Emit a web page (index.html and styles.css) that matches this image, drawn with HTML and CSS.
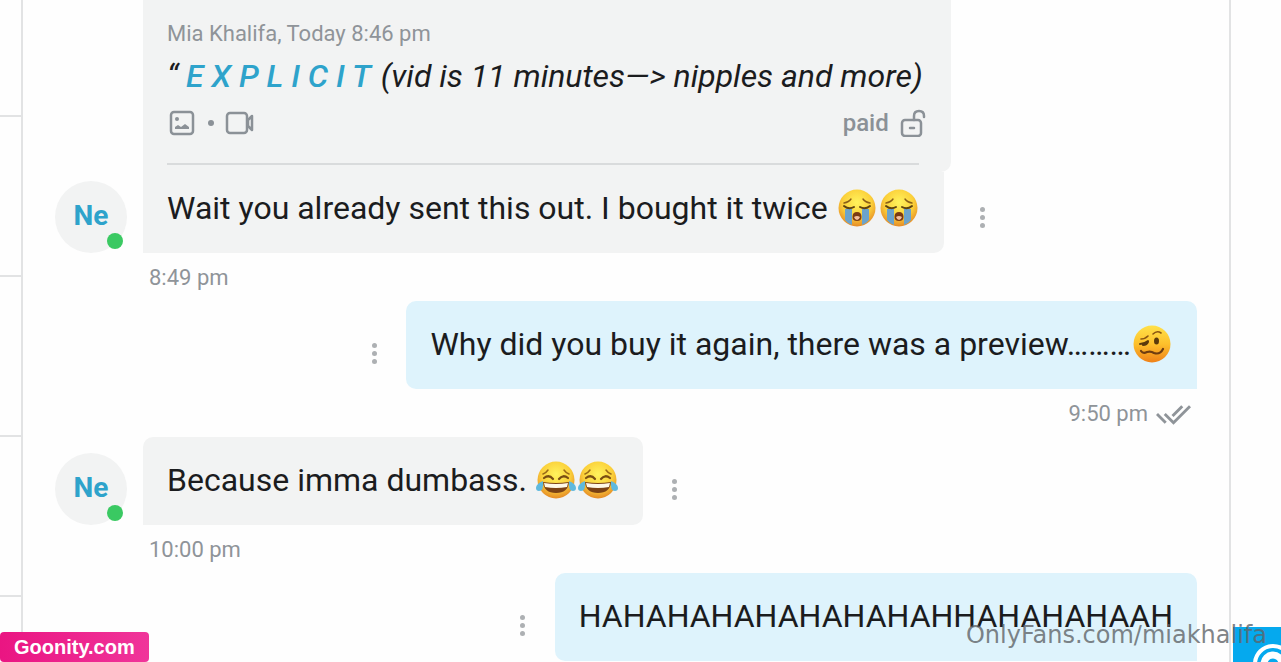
FILE: index.html
```html
<!DOCTYPE html>
<html lang="en">
<head>
  <meta charset="UTF-8" />
  <meta name="viewport" content="width=device-width, initial-scale=1.0"/>
  <title>Messages</title>
  <link rel="stylesheet" href="styles.css">
</head>
<body>
  <!-- shared emoji drawings -->
  <svg class="defs" aria-hidden="true">
    <defs>
      <radialGradient id="skin" cx="50%" cy="35%" r="65%">
        <stop offset="0" stop-color="#fff35c"/>
        <stop offset="0.6" stop-color="#fbd03a"/>
        <stop offset="1" stop-color="#e58a26"/>
      </radialGradient>
      <linearGradient id="skin-warm" x1="0" y1="0" x2="0" y2="1">
        <stop offset="0" stop-color="#ffe14a"/>
        <stop offset="0.5" stop-color="#fdc02c"/>
        <stop offset="1" stop-color="#ef8118"/>
      </linearGradient>
      <symbol id="cry" viewBox="0 0 38 38">
        <circle cx="19" cy="19" r="18.5" fill="url(#skin)"/>
        <path d="M7 20h7v16q-4-1-7-5zM24 20h7v11q-3 4-7 5z" fill="#6ba3cc"/>
        <path d="M6 14q5-1 7-4M32 14q-5-1-7-4" fill="none" stroke="#8a5f18" stroke-width="1.4" stroke-linecap="round"/>
        <path d="M6 17q5 4 10 1M22 18q5 3 10-1" fill="none" stroke="#5f430f" stroke-width="2" stroke-linecap="round"/>
        <path d="M14.500 28q0-5 4.500-5t4.500 5q0 4-4.500 4t-4.500-4z" fill="#7a3a12"/>
        <path d="M16 28q3-2 6 0-1 3-3 3t-3-3z" fill="#f4bf9c"/>
      </symbol>
      <symbol id="joy" viewBox="0 0 42 38">
        <circle cx="21" cy="19" r="18.5" fill="url(#skin)"/>
        <path d="M8 13q3-1 5-4M34 13q-3-1-5-4" fill="none" stroke="#9a6a18" stroke-width="1.5" stroke-linecap="round"/>
        <path d="M9 17q5-4 9 1M24 18q4-5 9-1" fill="none" stroke="#7a4e12" stroke-width="2.2" stroke-linecap="round"/>
        <path d="M8 21q13 2 26 0-1 11-13 11T8 21z" fill="#7b4114"/>
        <path d="M9 22q12 2 24 0l-1 4q-11 2-22 0z" fill="#fff8e6"/>
        <path d="M8 20q-7 3-7 7 0 3 3 3 5 0 4-10zM34 20q7 3 7 7 0 3-3 3-5 0-4-10z" fill="#5fb9de"/>
      </symbol>
      <symbol id="woozy" viewBox="0 0 38 38">
        <circle cx="19" cy="19" r="18.5" fill="url(#skin-warm)"/>
        <path d="M8 14q4 0 7-3M20 9q4-4 8-1" fill="none" stroke="#8a5512" stroke-width="1.6" stroke-linecap="round"/>
        <path d="M7 19q4 0 8-3M10 20q4 0 5-3" fill="none" stroke="#5a3a0c" stroke-width="2" stroke-linecap="round"/>
        <ellipse cx="23.500" cy="16" rx="2.5" ry="3.5" fill="#5a3a0c"/>
        <path d="M8 26q2 3 6 1 4-1 7 1 6 2 9-4" fill="none" stroke="#6e3c10" stroke-width="2.2" stroke-linecap="round"/>
      </symbol>
    </defs>
  </svg>

  <aside class="chat-list">
    <div class="chat-item"></div>
    <div class="chat-item"></div>
    <div class="chat-item"></div>
    <div class="chat-item"></div>
  </aside>

  <main class="chat">
    <div class="message">
      <div class="avatar">Ne<span class="online"></span></div>
      <div class="content">
        <div class="quote">
          <div class="quote-author">Mia Khalifa, Today 8:46 pm</div>
          <div class="quote-text">“ <b>E X P L I C I T</b> (vid is 11 minutes—&gt; nipples and more)</div>
          <div class="quote-footer">
            <svg class="icon" viewBox="0 0 28 28">
              <rect x="2" y="3" width="22" height="22" rx="3"/>
              <circle class="solid" cx="8" cy="10" r="2"/>
              <path class="solid" d="M6 20v-2l3-2 3 2 4-3 4 3v2z"/>
            </svg>
            <span class="dot"></span>
            <svg class="icon video" viewBox="0 0 30 28">
              <rect x="2" y="4" width="20" height="20" rx="3"/>
              <path d="M23 11l4-4v14l-4-4z"/>
            </svg>
            <span class="paid">paid</span>
            <svg class="icon" viewBox="0 0 28 28">
              <rect x="3" y="11" width="19" height="16" rx="3"/>
              <path d="M15 11V7q0-5 5-5t5 5v1M11 19h4"/>
            </svg>
          </div>
          <hr class="quote-line">
        </div>
        <div class="bubble reply">Wait you already sent this out. I bought it twice <svg class="emoji"><use href="#cry"/></svg><svg class="emoji"><use href="#cry"/></svg></div>
      </div>
      <button class="more" aria-label="Message options"><i></i><i></i><i></i></button>
    </div>
    <div class="meta">8:49 pm</div>

    <div class="message own">
      <button class="more" aria-label="Message options"><i></i><i></i><i></i></button>
      <div class="bubble">Why did you buy it again, there was a preview………<svg class="emoji"><use href="#woozy"/></svg></div>
    </div>
    <div class="meta own">9:50 pm
      <svg class="checks" viewBox="0 0 36 22">
        <path d="M1 11l9 9M9 11l9 9L35 3M17 13L27 3"/>
      </svg>
    </div>

    <div class="message">
      <div class="avatar">Ne<span class="online"></span></div>
      <div class="bubble">Because imma dumbass. <svg class="emoji joy"><use href="#joy"/></svg><svg class="emoji joy"><use href="#joy"/></svg></div>
      <button class="more" aria-label="Message options"><i></i><i></i><i></i></button>
    </div>
    <div class="meta">10:00 pm</div>

    <div class="message own">
      <button class="more" aria-label="Message options"><i></i><i></i><i></i></button>
      <div class="bubble">HAHAHAHAHAHAHAHAHHAHAHAHAAH</div>
    </div>
  </main>

  <aside class="side">
    <div class="promo">
      <svg viewBox="0 0 48 35">
        <circle cx="40" cy="37" r="18" fill="none" stroke="#fff" stroke-width="4"/>
        <circle cx="40" cy="37" r="9" fill="none" stroke="#fff" stroke-width="7"/>
      </svg>
    </div>
  </aside>

  <div class="site-tag">Goonity.com</div>
  <div class="watermark">OnlyFans.com/miakhalifa</div>
</body>
</html>
```
FILE: styles.css
```css
* {
  box-sizing: border-box;
  margin: 0;
  padding: 0;
}

body {
  position: relative;
  display: flex;
  height: 100vh;
  overflow: hidden;
  background: #fefefe;
  color: #1b1c1e;
  font-family: Roboto, sans-serif;
  font-size: 32px;
  line-height: 40px;
}

.defs {
  position: absolute;
  width: 0;
  height: 0;
}

/* left list */
.chat-list {
  flex: none;
  width: 23px;
  border-right: 2px solid #e2e3e4;
}

.chat-item {
  height: 160px;
  border-bottom: 2px solid #e2e3e4;
}

.chat-item:first-child {
  height: 117px;
}

/* conversation */
.chat {
  flex: 1;
  min-width: 0;
  padding: 0 32px;
}

.message {
  display: flex;
  align-items: flex-end;
}

.message.own {
  justify-content: flex-end;
}

.avatar {
  position: relative;
  flex: none;
  width: 72px;
  height: 72px;
  margin-right: 16px;
  border-radius: 50%;
  background: #f2f3f3;
  color: #2ea3cb;
  font-size: 28px;
  font-weight: 700;
  line-height: 70px;
  text-align: center;
}

.online {
  position: absolute;
  right: 4px;
  bottom: 4px;
  width: 16px;
  height: 16px;
  border-radius: 50%;
  background: #3ac962;
}

.content {
  display: flex;
  flex-direction: column;
  align-items: flex-start;
}

.quote,
.bubble {
  background: #f2f3f3;
  white-space: nowrap;
}

.quote {
  padding: 20px 24px 7px;
  border-radius: 0 0 10px 0;
}

.quote-author {
  color: #8f9499;
  font-size: 22px;
  line-height: 28px;
}

.quote-text {
  margin-top: 8px;
  padding-right: 4px;
  font-style: italic;
}

.quote-text b {
  margin-right: 2px;
  color: #2ea3cb;
  font-weight: 500;
}

.quote-footer {
  display: flex;
  align-items: center;
  height: 67px;
  padding: 0 0 14px 2px;
  color: #8b9197;
}

.quote-line {
  margin-right: 8px;
  border: none;
  border-top: 2px solid #d9dbdc;
}

.icon {
  flex: none;
  width: 28px;
  height: 28px;
  fill: none;
  stroke: #8b9197;
  stroke-width: 2.5;
  stroke-linejoin: round;
  stroke-linecap: round;
}

.icon.video {
  width: 30px;
}

.icon .solid {
  fill: #8b9197;
  stroke: none;
}

.dot {
  width: 6px;
  height: 6px;
  margin: 0 11px;
  border-radius: 50%;
  background: #8b9197;
}

.paid {
  margin-left: auto;
  margin-right: 10px;
  font-size: 24px;
  font-weight: 500;
}

.bubble {
  padding: 23px 24px 25px;
  border-radius: 10px 10px 10px 0;
}

.bubble.reply {
  padding-top: 16px;
  border-radius: 0 0 10px 0;
}

.own .bubble {
  border-radius: 10px 10px 0 10px;
  background: #def3fc;
}

.emoji {
  width: 38px;
  height: 38px;
  margin: 0 2px;
  vertical-align: -8px;
}

.emoji.joy {
  width: 42px;
  margin: 0;
}

.more {
  display: flex;
  flex: none;
  flex-direction: column;
  align-items: center;
  justify-content: center;
  gap: 3px;
  width: 64px;
  height: 72px;
  border: none;
  background: none;
  cursor: pointer;
}

.more i {
  width: 5px;
  height: 5px;
  border-radius: 50%;
  background: #adb0b3;
}

.meta {
  padding: 2px 0 0 94px;
  color: #8f9499;
  font-size: 22px;
  line-height: 46px;
}

.meta.own {
  display: flex;
  align-items: center;
  justify-content: flex-end;
  gap: 8px;
  padding-right: 6px;
}

.checks {
  width: 35px;
  height: 22px;
  fill: none;
  stroke: #8f9499;
  stroke-width: 3;
}

/* right column */
.side {
  display: flex;
  flex: none;
  align-items: flex-end;
  width: 52px;
  border-left: 2px solid #e2e3e4;
}

.promo {
  width: 48px;
  height: 35px;
  margin-left: auto;
  background: #05a9ee;
}

.promo svg {
  display: block;
  width: 48px;
  height: 35px;
}

/* overlays */
.site-tag {
  position: absolute;
  left: 0;
  bottom: 0;
  padding: 0 14px;
  border-radius: 4px;
  background: linear-gradient(90deg, #ea1582, #f0359a);
  color: #fff;
  font-family: "Liberation Sans", sans-serif;
  font-size: 20px;
  font-weight: 700;
  line-height: 30px;
}

.watermark {
  position: absolute;
  right: 14px;
  bottom: 12px;
  color: rgba(95, 99, 103, 0.8);
  font-family: "DejaVu Sans", sans-serif;
  font-size: 24px;
  line-height: 30px;
}
```
